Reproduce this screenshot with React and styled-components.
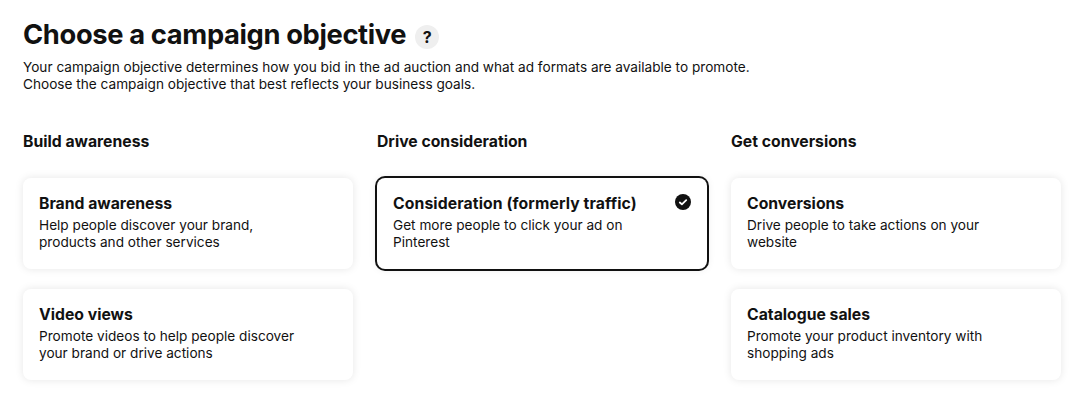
import React from 'react';
import styled, { createGlobalStyle } from 'styled-components';

const Global = createGlobalStyle`
  * { box-sizing: border-box; }
  body { margin: 0; background: #fff; color: #111; font-family: Inter, "Liberation Sans", sans-serif; }
`;
const Page = styled.main`
  min-height: 418px;
  padding: 19px 16px 0 23px;
`;
const Header = styled.header`
  display: flex;
  align-items: center;
  gap: 9px;
  height: 32px;
`;
const Title = styled.h1`
  margin: 0;
  font-size: 27.3px;
  line-height: 32px;
  font-weight: 700;
  letter-spacing: -0.35px;
  white-space: nowrap;
`;
const Help = styled.button`
  display: grid;
  place-items: center;
  width: 24px;
  height: 24px;
  margin-top: 4px;
  padding: 0;
  border: 0;
  border-radius: 50%;
  background: #efefef;
  color: #111;
  font: 700 16px/24px Inter, sans-serif;
`;
const Intro = styled.p`
  margin: 8px 0 0;
  font-size: 13.63px;
  line-height: 17px;
  white-space: nowrap;
`;
const Columns = styled.div`
  display: grid;
  grid-template-columns: repeat(3, 330px);
  column-gap: 24px;
  margin-top: 38px;
`;
const Column = styled.section`
  display: flex;
  flex-direction: column;
  gap: 20px;
`;
const Heading = styled.h2`
  margin: 0 0 5px;
  font-size: 15.75px;
  line-height: 22px;
  font-weight: 700;
`;
const Card = styled.article`
  display: flex;
  justify-content: space-between;
  height: 91px;
  padding: 15px 16px;
  border-radius: 8px;
  background: #fff;
  box-shadow: ${(p) => (p.$selected ? '0 0 0 2px #111, 0 0 8px rgba(0, 0, 0, 0.1)' : '0 0 8px rgba(0, 0, 0, 0.1)')};
`;
const CardTitle = styled.h3`
  margin: 0;
  font-size: 15.75px;
  line-height: 22px;
  font-weight: 700;
  letter-spacing: ${(p) => (p.$selected ? '0.1px' : 'normal')};
  white-space: nowrap;
`;
const CardText = styled.p`
  margin: 2px 0 0;
  font-size: 13.63px;
  line-height: 17px;
  white-space: nowrap;
`;
const Check = styled.svg`
  width: 16px;
  height: 16px;
  margin-top: 1px;
  flex: none;
`;

const groups = [
  { name: 'Build awareness', cards: [
    { title: 'Brand awareness', lines: ['Help people discover your brand,', 'products and other services'] },
    { title: 'Video views', lines: ['Promote videos to help people discover', 'your brand or drive actions'] },
  ] },
  { name: 'Drive consideration', cards: [
    { title: 'Consideration (formerly traffic)', lines: ['Get more people to click your ad on', 'Pinterest'], selected: true },
  ] },
  { name: 'Get conversions', cards: [
    { title: 'Conversions', lines: ['Drive people to take actions on your', 'website'] },
    { title: 'Catalogue sales', lines: ['Promote your product inventory with', 'shopping ads'] },
  ] },
];

export default function App() {
  return (
    <>
      <Global />
      <Page>
        <Header><Title>Choose a campaign objective</Title><Help>?</Help></Header>
        <Intro>
          Your campaign objective determines how you bid in the ad auction and what ad formats are available to promote.<br />
          Choose the campaign objective that best reflects your business goals.
        </Intro>
        <Columns>
          {groups.map((g) => (
            <Column key={g.name}>
              <Heading>{g.name}</Heading>
              {g.cards.map((c) => (
                <Card key={c.title} $selected={c.selected}>
                  <div>
                    <CardTitle $selected={c.selected}>{c.title}</CardTitle>
                    <CardText>{c.lines[0]}<br />{c.lines[1]}</CardText>
                  </div>
                  {c.selected && (
                    <Check viewBox="0 0 16 16" fill="none">
                      <circle cx="8" cy="8" r="8" fill="#111" />
                      <path d="M4.8 8.5 6.9 10.3 11.2 6.2" stroke="#fff" strokeWidth="1.8" strokeLinecap="round" strokeLinejoin="round" />
                    </Check>
                  )}
                </Card>
              ))}
            </Column>
          ))}
        </Columns>
      </Page>
    </>
  );
}
